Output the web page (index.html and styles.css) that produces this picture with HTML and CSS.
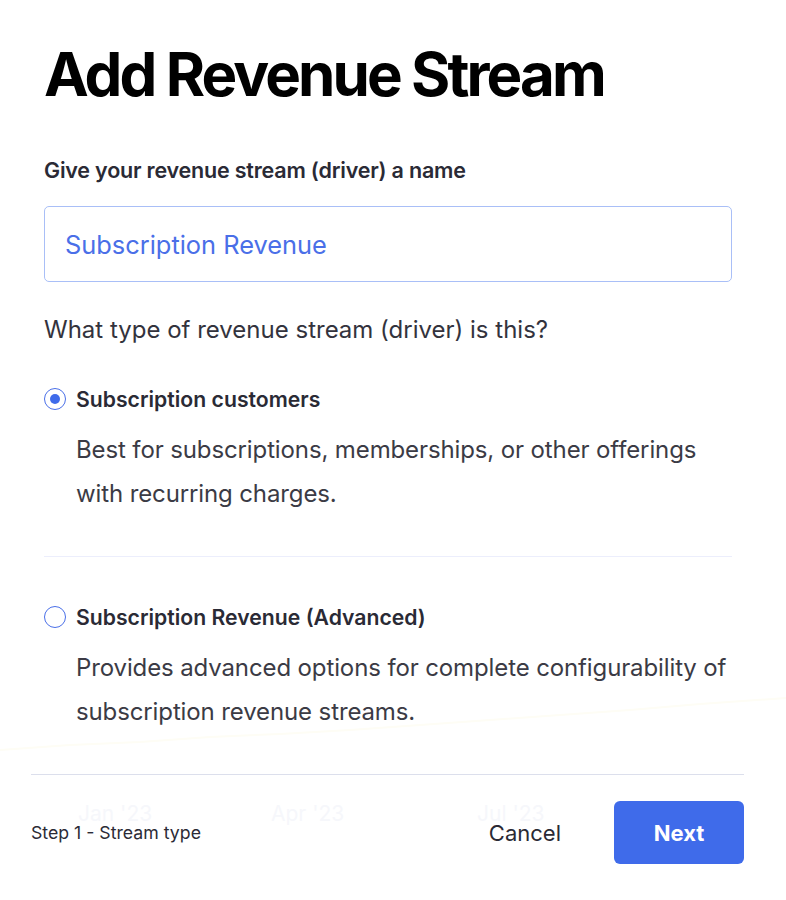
FILE: index.html
```html
<!DOCTYPE html>
<html>
<head>
<title>Add Revenue Stream</title>
<link rel="stylesheet" href="styles.css">
</head>
<body>
<div class="modal">
	<svg class="trend" width="786" height="80" viewBox="0 0 786 80">
		<polyline points="0,60 70,55 140,52 210,47 280,44 350,40 420,35 490,30 560,25 630,20 700,14 786,8" fill="none" stroke="#fefdf5" stroke-width="2"/>
	</svg>
	<div class="body">
		<h1>Add Revenue Stream</h1>
		<div class="fieldLabel">Give your revenue stream (driver) a name</div>
		<input type="text" class="nameInput" value="Subscription Revenue"/>
		<div class="question">What type of revenue stream (driver) is this?</div>
		<div class="option">
			<div class="optionHead">
				<span class="radio checked"></span>
				<span class="optionName">Subscription customers</span>
			</div>
			<div class="optionDesc">Best for subscriptions, memberships, or other offerings with recurring charges.</div>
		</div>
		<div class="option last">
			<div class="optionHead">
				<span class="radio"></span>
				<span class="optionName">Subscription Revenue (Advanced)</span>
			</div>
			<div class="optionDesc">Provides advanced options for complete configurability of subscription revenue streams.</div>
		</div>
	</div>
	<div class="footer">
		<div class="ghost">
			<span class="jan">Jan '23</span><span class="apr">Apr '23</span><span class="jul">Jul '23</span>
		</div>
		<div class="step">Step 1 - Stream type</div>
		<div class="actions">
			<button class="cancel">Cancel</button>
			<button class="next">Next</button>
		</div>
	</div>
</div>
</body>
</html>
```

FILE: styles.css
```css
html,body{
	margin:0;
	padding:0;
	background:#fff;
	font-family:"Inter","Roboto",sans-serif;
	color:#2b2b36;
}
.modal{
	position:relative;
	width:786px;
}
.trend{
	position:absolute;
	top:690px;
	left:0;
}
.body{
	position:relative;
	padding:38px 54px 0 44px;
}
h1{
	margin:0;
	font-size:60px;
	line-height:72px;
	font-weight:700;
	color:#000;
	letter-spacing:-2.9px;
}
.fieldLabel{
	margin-top:46px;
	font-size:21.5px;
	line-height:28px;
	font-weight:600;
	color:#2a2a35;
	letter-spacing:-0.2px;
}
.nameInput{
	display:block;
	box-sizing:border-box;
	width:100%;
	height:76px;
	margin-top:22px;
	padding:0 20px;
	border:1px solid #a9bff7;
	border-radius:5px;
	font-family:inherit;
	font-size:25.4px;
	color:#4a6fe8;
	outline:none;
}
.question{
	margin-top:32px;
	font-size:24px;
	line-height:32px;
	color:#33333d;
}
.option{
	padding:39px 0 40px 0;
	border-bottom:1px solid #eceefc;
}
.option.last{
	padding-top:46px;
	border-bottom:none;
}
.optionHead{
	display:flex;
	align-items:center;
	gap:10px;
	height:28px;
}
.radio{
	box-sizing:border-box;
	width:22px;
	height:22px;
	border:1.5px solid #4a6fe8;
	border-radius:50%;
	display:flex;
	align-items:center;
	justify-content:center;
}
.radio.checked::after{
	content:"";
	width:10px;
	height:10px;
	border-radius:50%;
	background:#3f6bea;
}
.optionName{
	font-size:21.2px;
	font-weight:600;
	color:#2a2a35;
}
.optionDesc{
	margin-top:15px;
	padding-left:32px;
	font-size:24px;
	line-height:44px;
	color:#3b3b45;
	letter-spacing:-0.12px;
}
.footer{
	position:relative;
	margin:0 42px 0 31px;
	border-top:1px solid #dcdfec;
	padding-top:26px;
	display:flex;
	align-items:center;
	justify-content:space-between;
}
.ghost{
	position:absolute;
	top:26px;
	left:0;
	font-size:21px;
	color:#f6f7fb;
	white-space:nowrap;
}
.ghost span{
	position:absolute;
	top:0;
}
.ghost .jan{ left:47px; }
.ghost .apr{ left:240px; }
.ghost .jul{ left:446px; }
.step{
	position:relative;
	font-size:17.7px;
	color:#2b2b36;
}
.actions{
	position:relative;
	display:flex;
	align-items:center;
	gap:53px;
}
button{
	font-family:inherit;
	border:none;
	cursor:pointer;
}
.cancel{
	background:none;
	font-size:22px;
	color:#2a2a35;
	padding:0;
}
.next{
	width:130px;
	height:63px;
	background:#3f6bea;
	color:#fff;
	font-size:22px;
	font-weight:700;
	border-radius:6px;
}
```
